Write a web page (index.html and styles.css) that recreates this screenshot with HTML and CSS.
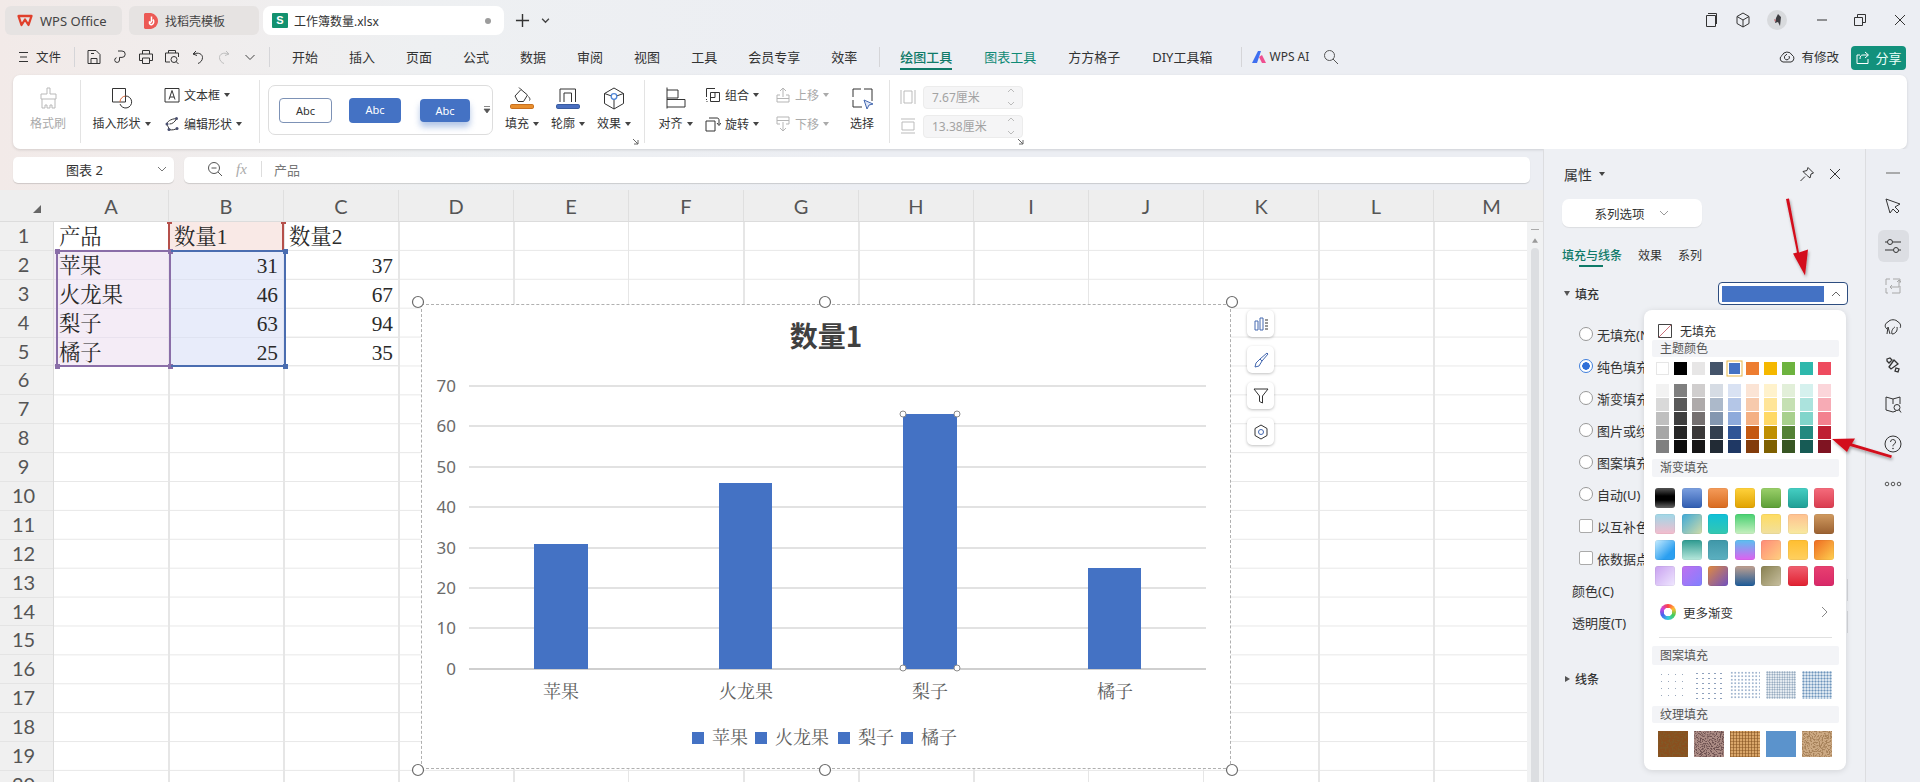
FILE: index.html
```html
<!DOCTYPE html>
<html lang="zh-CN">
<head>
<meta charset="utf-8">
<title>工作簿数量.xlsx - WPS Office</title>
<link rel="stylesheet" href="styles.css">
</head>
<body>
<div class="app">

<header class="titlebar">
  <div class="tab tab-home">
    <svg class="ic16" viewBox="0 0 16 16"><path d="M1.500 3h13L11.500 12 8 6.500 4.500 12z" fill="none" stroke="#e0402c" stroke-width="2.300" stroke-linejoin="round"/></svg>
    <span>WPS Office</span>
  </div>
  <div class="tab tab-tpl">
    <svg class="ic16" viewBox="0 0 16 16"><path d="M2 0h6c4 1 7 4 7 8s-3 7-7 8H2l-1-1V1z" fill="#ec5a55"/><path d="M8.500 3.500v4.500c0 1-1 1.500-2 1-.5 2 1 3 2.500 2.500s2.500-3 1-5" fill="none" stroke="#fff" stroke-width="1.500"/></svg>
    <span>找稻壳模板</span>
  </div>
  <div class="tab tab-file">
    <span class="s-badge">S</span>
    <span class="tab-name">工作簿数量.xlsx</span>
    <i class="dot"></i>
  </div>
  <svg class="plus" viewBox="0 0 16 16"><path d="M8 1v14M1 8h14" stroke="#333" stroke-width="1.500"/></svg>
  <svg class="chev" viewBox="0 0 8 8"><path d="M1 2.500l3 3 3-3" fill="none" stroke="#444" stroke-width="1.200"/></svg>
  <div class="winctl">
    <svg class="ic16" viewBox="0 0 16 16"><path d="M3.500 3.500h9v11h-9zM5 1.500h8.500V12" fill="none" stroke="#333"/></svg>
    <svg class="ic16" viewBox="0 0 16 16"><path d="M8 1l6 3.500v7L8 15l-6-3.500v-7zM2 4.500l6 3.500 6-3.500M8 8v7" fill="none" stroke="#333"/></svg>
    <svg class="avatar" viewBox="0 0 20 20"><circle cx="10" cy="10" r="10" fill="#d8dadd"/><path d="M11 4l3 3-1 9-2-4-3 1 1-5z" fill="#3c3c40"/><path d="M7 9l2 1-1 2z" fill="#c8626a"/></svg>
    <svg class="ic12 min" viewBox="0 0 12 12"><path d="M1 6h10" stroke="#333"/></svg>
    <svg class="ic16 max" viewBox="0 0 16 16"><path d="M2.500 5.500h8v8h-8zM5.500 5.500v-3h8v8h-3" fill="none" stroke="#333"/></svg>
    <svg class="ic12 cls" viewBox="0 0 12 12"><path d="M1 1l10 10M11 1L1 11" stroke="#333"/></svg>
  </div>
</header>

<nav class="menubar">
  <div class="file-btn">
    <svg class="ic12" viewBox="0 0 12 12"><path d="M1 1.500h9M2 6h7M1 10.500h9" stroke="#333" stroke-width="1.100"/></svg>
    <span>文件</span>
  </div>
  <i class="vsep"></i>
  <div class="quick">
    <svg class="ic16" viewBox="0 0 16 16"><path d="M2 1.500h8l4 4v9H2zM5 14.500v-5h6v5M5 4.500h3" fill="none" stroke="#333"/></svg>
    <svg class="ic16" viewBox="0 0 16 16"><path d="M6 2h4a3.200 3.200 0 0 1 0 6.400H7.500v2.600a2.400 2.400 0 1 1-3-2.300" fill="none" stroke="#333"/></svg>
    <svg class="ic16" viewBox="0 0 16 16"><path d="M4.500 5V1.500h7V5M4.500 11.500H1.500V5h13v6.500h-3M4.500 9h7v5.500h-7z" fill="none" stroke="#333"/></svg>
    <svg class="ic16" viewBox="0 0 16 16"><path d="M4.500 4V1.500h7V4M6 13H1.500V4h13v4" fill="none" stroke="#333"/><circle cx="10" cy="10.500" r="3" fill="none" stroke="#333"/><path d="M12 12.500l2.500 2.500" stroke="#333"/></svg>
    <svg class="ic16" viewBox="0 0 16 16"><path d="M6 2L3 5l4 1.500M3.500 5c5-2 9 0 9 3.500 0 3-2 5-4.500 6" fill="none" stroke="#333"/></svg>
    <svg class="ic16" viewBox="0 0 16 16"><path d="M10 2l3 3-4 1.500M12.500 5c-5-2-9 0-9 3.500 0 3 2 5 4.500 6" fill="none" stroke="#bdbdbd"/></svg>
    <svg class="ic16" viewBox="0 0 16 16"><path d="M3.500 6l4.500 4.500L12.500 6" fill="none" stroke="#444"/></svg>
  </div>
  <i class="vsep sep-menu"></i>
  <div class="menus">
    <span>开始</span><span>插入</span><span>页面</span><span>公式</span><span>数据</span><span>审阅</span><span>视图</span><span>工具</span><span>会员专享</span><span>效率</span>
  </div>
  <i class="vsep sep-ctx"></i>
  <div class="menus menus-ctx">
    <span class="on">绘图工具</span><span class="green">图表工具</span><span>方方格子</span><span>DIY工具箱</span>
  </div>
  <i class="vsep sep-ai"></i>
  <svg class="ai-logo" viewBox="0 0 14 14"><path d="M0 13L6 1h3L5 13z" fill="#3f6ff0"/><path d="M7 7l3 6h4l-4-8z" fill="#ef4f90"/></svg>
  <span class="ai-text">WPS AI</span>
  <svg class="ic16 ai-search" viewBox="0 0 16 16"><circle cx="6.500" cy="6.500" r="5" fill="none" stroke="#555"/><path d="M10 10l5 5" stroke="#555"/></svg>
  <div class="menu-right">
    <svg class="ic16" viewBox="0 0 16 16"><path d="M4 13a3.500 3.500 0 0 1-1-6.500A5.500 5.500 0 0 1 13 6a3.800 3.800 0 0 1-1 7z" fill="none" stroke="#333"/><path d="M10 7a2.500 2.500 0 1 1-3-1l1-1" fill="none" stroke="#333"/></svg>
    <span class="saved">有修改</span>
    <button class="share">
      <svg class="ic16" viewBox="0 0 16 16"><path d="M13 9v4.500H2V5h3M10 2l3.500 3L10 8M13 5H8c-2 0-3 1-3 4" fill="none" stroke="#fff"/></svg>
      <span>分享</span>
    </button>
  </div>
</nav>

<section class="ribbon">
  <div class="rgroup g-paint">
    <div class="big disabled">
      <svg class="ic24" viewBox="0 0 24 24"><path d="M11 2h3v6h6v5H5V8h6zM6 13v9h3v-3h2v3h3v-3h2v3h3v-9" fill="none" stroke="#b9b9b9"/></svg>
      <span>格式刷</span>
    </div>
  </div>
  <div class="rgroup g-shape">
    <div class="big w57">
      <svg class="ic24" viewBox="0 0 24 24"><path d="M2.500 2.500h13v13.500h-13z" fill="none" stroke="#333"/><path d="M15.500 10a6 6 0 1 1-5.500 8" fill="none" stroke="#333"/><path d="M10 16a6 6 0 0 1 5.500-6" fill="none" stroke="#dc6a3c"/></svg>
      <span>插入形状<b class="ca"></b></span>
    </div>
    <div class="scol">
      <div class="sitem"><svg class="ic16" viewBox="0 0 16 16"><path d="M4 1.500H1V15h3M12 1.500h3V15h-3M4 1.500h8M4 15h8" fill="none" stroke="#333"/><path d="M5 12.500l3-9 3 9M6 10h4" fill="none" stroke="#333"/></svg><span>文本框<b class="ca"></b></span></div>
      <div class="sitem"><svg class="ic16" viewBox="0 0 16 16"><path d="M12.500 2.500C6 3 3 6 3 8s2 3 2 5.500M5 13.500c3 1 6 0 8-1M5.500 8c3 0 5-2 7-5" fill="none" stroke="#333"/><circle cx="12.500" cy="2.500" r="1.500" fill="#4a4f70"/><circle cx="3" cy="8" r="1.500" fill="#4a4f70"/><circle cx="5" cy="13.500" r="1.500" fill="#4a4f70"/><circle cx="13" cy="12.500" r="1.500" fill="#4a4f70"/></svg><span>编辑形状<b class="ca"></b></span></div>
    </div>
  </div>
  <div class="rgroup g-style">
    <div class="gallery">
      <span class="abc abc-outline">Abc</span>
      <span class="abc abc-fill">Abc</span>
      <span class="abc abc-glow">Abc</span>
      <svg class="gal-more" viewBox="0 0 8 10"><path d="M1 1.500h6M1 4l3 4 3-4z" fill="#555" stroke="#555" stroke-width=".7"/></svg>
    </div>
    <div class="big w34">
      <svg class="ic24" viewBox="0 0 24 24"><path d="M5 10l6-6.500 6.500 5.500-4 6.500H8zM11 3.500L9 1.500M18.500 10.500c1 1.500 2 2.500 1 4" fill="none" stroke="#333"/><rect x=".5" y="18.500" width="23" height="4" rx="1.200" fill="#e88f2e" stroke="#c87020"/></svg>
      <span>填充<b class="ca"></b></span>
    </div>
    <div class="big w34">
      <svg class="ic24" viewBox="0 0 24 24"><path d="M4 16V3h15.500v13M8 16V7h7.500v9" fill="none" stroke="#333"/><rect x=".5" y="18.500" width="23" height="4" rx="1.200" fill="#4a6fc0" stroke="#3a5ca0"/></svg>
      <span>轮廓<b class="ca"></b></span>
    </div>
    <div class="big w34">
      <svg class="ic24" viewBox="0 0 24 24"><path d="M12 2l9.500 5.500v10L12 23l-9.500-5.500v-10zM2.500 7.500l7 2.500M21.500 7.500l-7 2.500M12 13v10" fill="none" stroke="#333"/><circle cx="12" cy="10.500" r="2.800" fill="none" stroke="#4f86d8" stroke-width="1.300"/></svg>
      <span>效果<b class="ca"></b></span>
    </div>
    <svg class="corner" viewBox="0 0 7 7"><path d="M1 1l5 5M6 2v4H2" fill="none" stroke="#666"/></svg>
  </div>
  <div class="rgroup g-arrange">
    <div class="big w35">
      <svg class="ic24" viewBox="0 0 24 24"><path d="M3 1.500v21M3 4h11v8H3M3 13.500h18v7.500H3" fill="none" stroke="#333"/></svg>
      <span>对齐<b class="ca"></b></span>
    </div>
    <div class="scol w70">
      <div class="sitem"><svg class="ic16" viewBox="0 0 16 16"><path d="M1.500 10V1.500H10M5.500 5.500h9v9h-9zM10 5.500v5H5.500M1.500 12v1M1.500 14.500h1" fill="none" stroke="#333"/></svg><span>组合<b class="ca"></b></span></div>
      <div class="sitem"><svg class="ic16" viewBox="0 0 16 16"><path d="M1 5h9v10H1zM4 2h8c1.500 0 2 1 2 2v4M12 7l2 2.500L16 7" fill="none" stroke="#333"/></svg><span>旋转<b class="ca"></b></span></div>
    </div>
    <div class="scol w74 disabled">
      <div class="sitem"><svg class="ic16" viewBox="0 0 16 16"><path d="M8 1v9M5 4l3-3 3 3M5 8H2v7h12V8h-3M2 11.500h12" fill="none" stroke="#b5b5b5"/></svg><span>上移<b class="ca"></b></span></div>
      <div class="sitem"><svg class="ic16" viewBox="0 0 16 16"><path d="M5 8H2V1h12v7h-3M2 4.500h12M8 6v9M5 12l3 3 3-3" fill="none" stroke="#b5b5b5"/></svg><span>下移<b class="ca"></b></span></div>
    </div>
    <div class="big w26">
      <svg class="ic24" viewBox="0 0 24 24"><path d="M3 3h8M14 3h8v12M3 3v8M3 14v7h9" fill="none" stroke="#333"/><path d="M14 14l9 4-4 1-2 4z" fill="#dfe7f8" stroke="#4468b0"/></svg>
      <span>选择</span>
    </div>
  </div>
  <div class="rgroup g-size">
    <div class="sizerow">
      <svg class="ic16" viewBox="0 0 16 16"><path d="M1 1v14M15 1v14M4 2h8v12H4z" fill="none" stroke="#bbb"/></svg>
      <div class="num"><span>7.67厘米</span><svg class="spin" viewBox="0 0 8 20"><path d="M1 5l3-3 3 3M1 15l3 3 3-3" fill="none" stroke="#bbb"/></svg></div>
    </div>
    <div class="sizerow">
      <svg class="ic16" viewBox="0 0 16 16"><path d="M1 1h14M1 15h14M2 4h12v8H2z" fill="none" stroke="#bbb"/></svg>
      <div class="num"><span>13.38厘米</span><svg class="spin" viewBox="0 0 8 20"><path d="M1 5l3-3 3 3M1 15l3 3 3-3" fill="none" stroke="#bbb"/></svg></div>
    </div>
    <svg class="corner corner2" viewBox="0 0 7 7"><path d="M1 1l5 5M6 2v4H2" fill="none" stroke="#666"/></svg>
  </div>
</section>

<main class="work">
  <div class="left">
    <div class="formula">
      <div class="namebox"><span>图表 2</span><svg class="ic12" viewBox="0 0 12 12"><path d="M2 4l4 4 4-4" fill="none" stroke="#777"/></svg></div>
      <div class="fbar">
        <svg class="ic16" viewBox="0 0 16 16"><circle cx="7" cy="7" r="5.500" fill="none" stroke="#555"/><path d="M11 11l4 4M4.500 7h5" stroke="#555"/></svg>
        <i class="fx">fx</i>
        <i class="fsep"></i>
        <span>产品</span>
      </div>
    </div>

    <div class="sheet">
      <div class="colhead">
        <div class="corner-cell"><svg viewBox="0 0 10 10"><path d="M9 1v8H1z" fill="#666"/></svg></div>
        <span>A</span><span>B</span><span>C</span><span>D</span><span>E</span><span>F</span><span>G</span><span>H</span><span>I</span><span>J</span><span>K</span><span>L</span><span>M</span>
      </div>
      <div class="sheet-body">
        <div class="rowhead">
          <span>1</span><span>2</span><span>3</span><span>4</span><span>5</span><span>6</span><span>7</span><span>8</span><span>9</span><span>10</span><span>11</span><span>12</span><span>13</span><span>14</span><span>15</span><span>16</span><span>17</span><span>18</span><span>19</span><span>20</span>
        </div>
        <div class="grid">
          <div class="cell">产品</div><div class="cell tint-red">数量1</div><div class="cell">数量2</div>
          <div class="cell tint-pur">苹果</div><div class="cell tint-blu num-c">31</div><div class="cell num-c">37</div>
          <div class="cell tint-pur">火龙果</div><div class="cell tint-blu num-c">46</div><div class="cell num-c">67</div>
          <div class="cell tint-pur">梨子</div><div class="cell tint-blu num-c">63</div><div class="cell num-c">94</div>
          <div class="cell tint-pur">橘子</div><div class="cell tint-blu num-c">25</div><div class="cell num-c">35</div>
          <div class="rng rng-red"><i class="hd tl"></i><i class="hd tr"></i></div>
          <div class="rng rng-pur"><i class="hd tl"></i><i class="hd tr"></i><i class="hd bl"></i><i class="hd br"></i></div>
          <div class="rng rng-blu"><i class="hd tr"></i><i class="hd br"></i></div>

          <div class="chart">
            <svg class="plot" viewBox="421 304 810 465">
              <text class="ct-title" x="826" y="347" text-anchor="middle">数量1</text>
              <g stroke="#d9d9d9" stroke-width="1.300">
                <path d="M469 386H1206M469 426H1206M469 467H1206M469 507H1206M469 548H1206M469 588H1206M469 628H1206"/>
                <path d="M469 669H1206" stroke="#cfcfcf" stroke-width="2"/>
              </g>
              <g class="ct-axis" text-anchor="end">
                <text x="456" y="392">70</text><text x="456" y="432">60</text><text x="456" y="473">50</text><text x="456" y="513">40</text><text x="456" y="554">30</text><text x="456" y="594">20</text><text x="456" y="634">10</text><text x="456" y="675">0</text>
              </g>
              <g fill="#4472c4">
                <rect x="534" y="544" width="54" height="125"/>
                <rect x="719" y="483" width="53" height="186"/>
                <rect x="903" y="414" width="54" height="255"/>
                <rect x="1088" y="568" width="53" height="101"/>
              </g>
              <g fill="#fff" stroke="#8a8a8a">
                <circle cx="903" cy="414" r="3"/><circle cx="957" cy="414" r="3"/><circle cx="903" cy="668" r="3"/><circle cx="957" cy="668" r="3"/>
              </g>
              <g class="ct-cat" text-anchor="middle">
                <text x="561" y="698">苹果</text><text x="746" y="698">火龙果</text><text x="930" y="698">梨子</text><text x="1115" y="698">橘子</text>
              </g>
              <g fill="#4472c4">
                <rect x="692" y="732" width="12" height="12"/><rect x="755" y="732" width="12" height="12"/><rect x="838" y="732" width="12" height="12"/><rect x="901" y="732" width="12" height="12"/>
              </g>
              <g class="ct-cat">
                <text x="712" y="744">苹果</text><text x="775" y="744">火龙果</text><text x="858" y="744">梨子</text><text x="921" y="744">橘子</text>
              </g>
              <g fill="#fff" stroke="#6b6b6b" stroke-width="1.200">
                <circle cx="418" cy="302" r="5.500"/><circle cx="825" cy="302" r="5.500"/><circle cx="1232" cy="302" r="5.500"/>
                <circle cx="418" cy="770" r="5.500"/><circle cx="825" cy="770" r="5.500"/><circle cx="1232" cy="770" r="5.500"/>
              </g>
            </svg>
            <div class="chart-tools">
              <span><svg class="ic16" viewBox="0 0 16 16"><path d="M2 5h3v9H2zM7 2h3v12H7z" fill="none" stroke="#4468b0"/><path d="M12 4h3M12 7h3M12 10h3M12 13h3" stroke="#333"/></svg></span>
              <span><svg class="ic16" viewBox="0 0 16 16"><path d="M14 1l1 1-6 7-2-2zM7 7L3 11l-1 4 4-1 3-5" fill="none" stroke="#4468b0"/></svg></span>
              <span><svg class="ic16" viewBox="0 0 16 16"><path d="M1 1h14L9.500 8v7l-3-1.500V8z" fill="none" stroke="#333"/></svg></span>
              <span><svg class="ic16" viewBox="0 0 16 16"><path d="M8 1l6 3.500v7L8 15l-6-3.500v-7z" fill="none" stroke="#333"/><circle cx="8" cy="8" r="2.500" fill="none" stroke="#4468b0"/></svg></span>
            </div>
          </div>
        </div>
        <div class="vscroll">
          <i class="vs-minus"></i>
          <svg class="vs-up" viewBox="0 0 8 6"><path d="M4 0l4 6H0z" fill="#999"/></svg>
          <i class="vs-thumb"></i>
        </div>
      </div>
    </div>
  </div>

  <aside class="panel">
    <div class="p-head">
      <span class="p-title">属性<b class="ca"></b></span>
      <svg class="ic16 p-pin" viewBox="0 0 16 16"><path d="M9 1.500l5.500 5.500-2.500 1-1 4L7.500 9l-3.500-3.500 4-1zM6 10.500l-4.500 4.500" fill="none" stroke="#333"/></svg>
      <svg class="ic12 p-x" viewBox="0 0 12 12"><path d="M1 1l10 10M11 1L1 11" stroke="#333"/></svg>
    </div>
    <button class="p-select"><span>系列选项</span><svg class="ic12" viewBox="0 0 12 12"><path d="M2 4l4 4 4-4" fill="none" stroke="#999"/></svg></button>
    <div class="p-tabs"><span class="on">填充与线条</span><span>效果</span><span>系列</span></div>
    <div class="p-sec">
      <i class="tri-d"></i><strong>填充</strong>
      <div class="colorbox"><i></i><svg class="ic12" viewBox="0 0 12 12"><path d="M2 8l4-4 4 4" fill="none" stroke="#666"/></svg></div>
    </div>
    <div class="opts">
      <label class="opt"><i class="radio"></i>无填充(N)</label>
      <label class="opt"><i class="radio sel"></i>纯色填充(S)</label>
      <label class="opt"><i class="radio"></i>渐变填充(G)</label>
      <label class="opt"><i class="radio"></i>图片或纹理填充(P)</label>
      <label class="opt"><i class="radio"></i>图案填充(A)</label>
      <label class="opt"><i class="radio"></i>自动(U)</label>
      <label class="opt"><i class="check"></i>以互补色代表负值(H)</label>
      <label class="opt"><i class="check"></i>依数据点着色(V)</label>
      <div class="opt plain">颜色(C)<i class="ghost"></i></div>
      <div class="opt plain">透明度(T)<i class="ghost"></i></div>
    </div>
    <div class="p-sec p-line"><i class="tri-r"></i><strong>线条</strong></div>

    <div class="popup">
      <div class="pop-none">
        <svg class="ic14" viewBox="0 0 14 14"><path d="M.5.500h13v13H.500z" fill="none" stroke="#444"/><path d="M1 13L13 1" stroke="#c9707a"/></svg>
        <span>无填充</span>
      </div>
      <div class="pop-h">主题颜色</div>
      <svg class="theme" viewBox="0 0 175 14">
        <rect x=".5" y=".5" width="12" height="12" fill="#fff" stroke="#e6e6e6"/>
        <rect x="18" width="13" height="13" fill="#000"/>
        <rect x="36" width="13" height="13" fill="#e7e6e6"/>
        <rect x="54" width="13" height="13" fill="#44546a"/>
        <rect x="71" y="-1" width="15" height="15" fill="#fff" stroke="#e8b74a"/>
        <rect x="73" y="1" width="11" height="11" fill="#4472c4"/>
        <rect x="90" width="13" height="13" fill="#ed7d31"/>
        <rect x="108" width="13" height="13" fill="#f5b800"/>
        <rect x="126" width="13" height="13" fill="#6db33f"/>
        <rect x="144" width="13" height="13" fill="#2eb8ac"/>
        <rect x="162" width="13" height="13" fill="#ee4b5f"/>
      </svg>
      <svg class="shades" viewBox="0 0 175 69">
        <g><rect width="13" height="13" fill="#f2f2f2"/><rect y="14" width="13" height="13" fill="#d9d9d9"/><rect y="28" width="13" height="13" fill="#bfbfbf"/><rect y="42" width="13" height="13" fill="#a6a6a6"/><rect y="56" width="13" height="13" fill="#808080"/></g>
        <g transform="translate(18)"><rect width="13" height="13" fill="#7f7f7f"/><rect y="14" width="13" height="13" fill="#595959"/><rect y="28" width="13" height="13" fill="#3f3f3f"/><rect y="42" width="13" height="13" fill="#262626"/><rect y="56" width="13" height="13" fill="#0d0d0d"/></g>
        <g transform="translate(36)"><rect width="13" height="13" fill="#d0cece"/><rect y="14" width="13" height="13" fill="#aeaaaa"/><rect y="28" width="13" height="13" fill="#757070"/><rect y="42" width="13" height="13" fill="#3a3838"/><rect y="56" width="13" height="13" fill="#171616"/></g>
        <g transform="translate(54)"><rect width="13" height="13" fill="#d6dce4"/><rect y="14" width="13" height="13" fill="#acb9ca"/><rect y="28" width="13" height="13" fill="#8497b0"/><rect y="42" width="13" height="13" fill="#333f4f"/><rect y="56" width="13" height="13" fill="#222b35"/></g>
        <g transform="translate(72)"><rect width="13" height="13" fill="#d9e2f3"/><rect y="14" width="13" height="13" fill="#b4c6e7"/><rect y="28" width="13" height="13" fill="#8eaadb"/><rect y="42" width="13" height="13" fill="#2f5496"/><rect y="56" width="13" height="13" fill="#1f3864"/></g>
        <g transform="translate(90)"><rect width="13" height="13" fill="#fbe4d5"/><rect y="14" width="13" height="13" fill="#f7caac"/><rect y="28" width="13" height="13" fill="#f4b083"/><rect y="42" width="13" height="13" fill="#c45911"/><rect y="56" width="13" height="13" fill="#833c0b"/></g>
        <g transform="translate(108)"><rect width="13" height="13" fill="#fff2cc"/><rect y="14" width="13" height="13" fill="#ffe599"/><rect y="28" width="13" height="13" fill="#ffd966"/><rect y="42" width="13" height="13" fill="#bf8f00"/><rect y="56" width="13" height="13" fill="#7f6000"/></g>
        <g transform="translate(126)"><rect width="13" height="13" fill="#e2efd9"/><rect y="14" width="13" height="13" fill="#c5e0b3"/><rect y="28" width="13" height="13" fill="#a8d08d"/><rect y="42" width="13" height="13" fill="#538135"/><rect y="56" width="13" height="13" fill="#385623"/></g>
        <g transform="translate(144)"><rect width="13" height="13" fill="#d5f1ee"/><rect y="14" width="13" height="13" fill="#abe3dd"/><rect y="28" width="13" height="13" fill="#81d5cb"/><rect y="42" width="13" height="13" fill="#22897f"/><rect y="56" width="13" height="13" fill="#175b55"/></g>
        <g transform="translate(162)"><rect width="13" height="13" fill="#fbd5da"/><rect y="14" width="13" height="13" fill="#f7abb5"/><rect y="28" width="13" height="13" fill="#f3818f"/><rect y="42" width="13" height="13" fill="#bf1f33"/><rect y="56" width="13" height="13" fill="#7f1422"/></g>
      </svg>
      <div class="pop-h h-grad">渐变填充</div>
      <div class="grads">
        <i class="g1"></i><i class="g2"></i><i class="g3"></i><i class="g4"></i><i class="g5"></i><i class="g6"></i><i class="g7"></i>
        <i class="g8"></i><i class="g9"></i><i class="g10"></i><i class="g11"></i><i class="g12"></i><i class="g13"></i><i class="g14"></i>
        <i class="g15"></i><i class="g16"></i><i class="g17"></i><i class="g18"></i><i class="g19"></i><i class="g20"></i><i class="g21"></i>
        <i class="g22"></i><i class="g23"></i><i class="g24"></i><i class="g25"></i><i class="g26"></i><i class="g27"></i><i class="g28"></i>
      </div>
      <div class="pop-more">
        <i class="wheel"></i><span>更多渐变</span>
        <svg class="ic12" viewBox="0 0 12 12"><path d="M4 1l5 5-5 5" fill="none" stroke="#888"/></svg>
      </div>
      <div class="pop-div"></div>
      <div class="pop-h h-pat">图案填充</div>
      <div class="tiles">
        <i class="p1"></i><i class="p2"></i><i class="p3"></i><i class="p4"></i><i class="p5"></i>
      </div>
      <div class="pop-h h-tex">纹理填充</div>
      <div class="tiles tex">
        <svg viewBox="0 0 30 26"><rect width="30" height="26" fill="#8a4f1e"/><rect width="30" height="26" filter="url(#nDark)"/></svg>
        <svg viewBox="0 0 30 26"><rect width="30" height="26" fill="#ad8d86"/><rect width="30" height="26" filter="url(#nDark2)"/></svg>
        <i class="t3"></i>
        <i class="t4"></i>
        <svg viewBox="0 0 30 26"><rect width="30" height="26" fill="#cdaa84"/><rect width="30" height="26" filter="url(#nBrown)"/></svg>
      </div>
    </div>
  </aside>

  <aside class="rail">
    <svg class="rail-i" viewBox="0 0 18 18"><path d="M2 9h14" stroke="#999" stroke-width="1.600"/></svg>
    <svg class="rail-i r-cursor" viewBox="0 0 18 18"><path d="M2 2l14 5-5 3 4 4-2 2-4-4-3 4z" fill="none" stroke="#333"/></svg>
    <span class="rail-on"><svg class="rail-i" viewBox="0 0 18 18"><path d="M1 5h2M9 5h8M1 13h8M15 13h2" stroke="#333"/><circle cx="6" cy="5" r="2.500" fill="none" stroke="#333"/><circle cx="12" cy="13" r="2.500" fill="none" stroke="#333"/></svg></span>
    <svg class="rail-i" viewBox="0 0 18 18"><path d="M2 8V2h4M9 2h7v4M16 9v7H8M2 11v5h2M13 5l2-2M15 3l2 2M15 3v7H6M6 10l2-2M6 10l2 2" fill="none" stroke="#a8a8a8"/></svg>
    <svg class="rail-i" viewBox="0 0 18 18"><path d="M3 12C0 10 1 6 4 5c2-3 8-3 10 0 3 1 3 5 2 6M3 17l1-7 2 7M8 17c-1-3 1-6 3-7M8 17c3 0 6-3 5-7" fill="none" stroke="#333"/></svg>
    <svg class="rail-i" viewBox="0 0 18 18"><path d="M3 3l3-1 2 2-3 3-2-2zM15 13l-1 3-3-1 1-3zM5 11l5-7 4 4-7 5z" fill="none" stroke="#333" stroke-width="1.300"/></svg>
    <svg class="rail-i" viewBox="0 0 18 18"><path d="M9 3L2 1v13l7 2 3-1M9 3v5M9 3l7-2v7" fill="none" stroke="#333"/><circle cx="13" cy="11.500" r="3" fill="none" stroke="#333"/><path d="M15 13.500l2 3" stroke="#333"/></svg>
    <svg class="rail-i" viewBox="0 0 18 18"><circle cx="9" cy="9" r="8" fill="none" stroke="#333"/><path d="M6.500 7a2.500 2.500 0 1 1 3.500 2.300c-1 .4-1 1-1 2" fill="none" stroke="#333"/><circle cx="9" cy="13.500" r=".8" fill="#333"/></svg>
    <svg class="rail-i" viewBox="0 0 18 18"><circle cx="3" cy="9" r="1.800" fill="none" stroke="#555"/><circle cx="9" cy="9" r="1.800" fill="none" stroke="#555"/><circle cx="15" cy="9" r="1.800" fill="none" stroke="#555"/></svg>
  </aside>
</main>

<svg class="arrows" viewBox="0 0 1920 782">
  <defs>
    <filter id="shadow" x="-30%" y="-30%" width="160%" height="160%"><feDropShadow dx="1" dy="2" stdDeviation="1.500" flood-color="#000" flood-opacity=".35"/></filter>
    <filter id="nDark" x="0" y="0" width="100%" height="100%"><feTurbulence type="fractalNoise" baseFrequency=".55" numOctaves="2" seed="3"/><feColorMatrix values="0 0 0 0 .22 0 0 0 0 .1 0 0 0 0 .02 5 0 0 0 -2.200"/></filter>
    <filter id="nDark2" x="0" y="0" width="100%" height="100%"><feTurbulence type="fractalNoise" baseFrequency=".8" numOctaves="2" seed="8"/><feColorMatrix values="0 0 0 0 .15 0 0 0 0 .08 0 0 0 0 .08 6 0 0 0 -2.800"/></filter>
    <filter id="nBrown" x="0" y="0" width="100%" height="100%"><feTurbulence type="fractalNoise" baseFrequency=".7" numOctaves="2" seed="5"/><feColorMatrix values="0 0 0 0 .38 0 0 0 0 .22 0 0 0 0 .1 6 0 0 0 -2.700"/></filter>
  </defs>
  <g fill="#d3101c" filter="url(#shadow)">
    <path d="M1786 199l3-.500 10 54 9-3-3 26-12-22 4-1z"/>
    <path d="M1832 439l23-.500-3 5 40 12-1 2.500-41-12-3 6z"/>
  </g>
</svg>
</div>
</body>
</html>
```
FILE: styles.css
```css
*{box-sizing:border-box;margin:0;padding:0}
html,body{width:1920px;height:782px;overflow:hidden}
body{font-family:"Noto Sans","Noto Sans CJK SC",sans-serif;font-size:12px;color:#333;background:#eceef3}
i,b{font-style:normal;font-weight:normal;display:inline-block}
button{font:inherit;color:inherit;border:0;background:none}
svg{flex:none;display:block}
.ic12{width:12px;height:12px}.ic14{width:14px;height:14px}.ic16{width:16px;height:16px}.ic24{width:24px;height:24px}
.app{position:relative;width:1920px;height:782px;overflow:hidden;display:flex;flex-direction:column;background:linear-gradient(90deg,#f2eae8 0,#eef0f2 22%,#eceef3 45%)}

/* title bar */
.titlebar{height:40px;flex:none;display:flex;align-items:flex-start;padding:6px 0 0 5px}
.tab{height:29px;display:flex;align-items:center;border-radius:6px;background:#e6e3e2;margin-right:7px;white-space:nowrap}
.tab-home{width:117px;padding-left:12px;gap:7px;font-size:13px;color:#444}
.tab-tpl{width:130px;padding-left:14px;gap:6px;color:#444;margin-right:4px}
.tab-file{width:241px;background:#fff;border-radius:8px;padding-left:9px;gap:6px;margin-right:10px}
.s-badge{width:16px;height:15px;background:#13916f;color:#fff;font:bold 11px/15px "Liberation Sans",sans-serif;text-align:center;border-radius:1px}
.tab-name{flex:1}
.dot{width:6px;height:6px;border-radius:50%;background:#9c9c9c;margin-right:13px}
.plus{width:15px;height:15px;margin:7px 0 0 1px}
.chev{width:9px;height:9px;margin:10px 0 0 11px}
.winctl{margin-left:auto;display:flex;align-items:center;height:28px}
.winctl>svg:nth-child(2){margin-left:16px}
.avatar{width:20px;height:20px;margin-left:16px}
.min{margin-left:29px}.max{margin-left:24px}.cls{margin:0 14px 0 26px}

/* menu bar */
.menubar{height:35px;flex:none;display:flex;align-items:center;font-size:13px;color:#333;padding-bottom:2px}
.file-btn{display:flex;align-items:center;gap:6px;margin-left:18px;font-size:12.500px}
.vsep{width:1px;height:20px;background:#d5d5d8;margin-left:13px}
.quick{display:flex;gap:10px;margin-left:11px}
.sep-menu{margin-left:11px}
.menus{display:flex;gap:31px;margin-left:22px;white-space:nowrap}
.sep-ctx{margin-left:22px}
.menus-ctx{gap:32px;margin-left:20px}
.menus .on{color:#0f7a68;font-weight:500;position:relative}
.menus .on::after{content:"";position:absolute;left:0;right:0;bottom:-4px;height:2px;background:#0f7a68}
.green{color:#0f8a75}
.sep-ai{margin-left:29px}
.ai-logo{width:14px;height:14px;margin-left:10px}
.ai-text{margin-left:3px;font-size:12px}
.ai-search{margin-left:14px}
.menu-right{margin-left:auto;display:flex;align-items:center;padding-right:14px}
.saved{margin:0 12px 0 6px;font-size:12.500px}
.share{width:55px;height:24px;background:#12917c;border-radius:4px;color:#fff;display:flex;align-items:center;justify-content:center;gap:4px;font-size:13px;margin-top:2px}
.share span{color:#eafff9}

/* ribbon */
.ribbon{height:74px;flex:none;margin:0 13px;background:#fff;border-radius:7px;display:flex;box-shadow:0 1px 3px rgba(0,0,0,.13);font-size:12px}
.rgroup{position:relative;display:flex;height:100%;padding-top:9px}
.rgroup::after{content:"";position:absolute;right:0;top:5px;bottom:6px;width:1px;background:#e3e3e3}
.g-paint{width:68px;padding-left:18px}
.g-shape{width:179px;padding-left:12px;gap:14px}
.g-style{width:385px;padding-left:8px}
.g-arrange{width:245px;padding-left:13px}
.g-size{padding-left:10px;flex-direction:column;gap:5px;padding-top:10px;width:200px}
.g-size::after{display:none}
.big{display:flex;flex-direction:column;align-items:center;width:34px;white-space:nowrap}
.big svg{height:24px;width:24px;margin-top:2px}
.big span{margin-top:5px;line-height:17px;display:flex;align-items:center}
.w57{width:57px}.w34{width:34px;margin-left:12px}.w35{width:35px}.w26{width:26px}
.scol{display:flex;flex-direction:column;gap:9px;margin-top:1px}
.sitem{height:20px;display:flex;align-items:center;gap:4px;white-space:nowrap}
.sitem span{display:flex;align-items:center}
.w70{width:70px;margin-left:12px}.w74{width:74px}
.ca{width:0;height:0;border:3px solid transparent;border-top:4px solid #444;border-bottom:0;margin-left:4px}
.disabled,.disabled .ca{color:#aaa;border-top-color:#aaa}
.gallery{position:relative;width:225px;height:50px;margin-top:1px;border:1px solid #ddd;border-radius:7px;display:flex;align-items:center;padding-left:10px;font:11px "Noto Sans",sans-serif}
.abc{display:block;height:25px;line-height:24px;text-align:center;border-radius:4px}
.abc-outline{width:53px;border:1.500px solid #7d92b6;color:#333}
.abc-fill{width:52px;background:#4472c4;color:#fff;margin-left:17px}
.abc-glow{width:50px;background:#4472c4;color:#fff;margin-left:19px;height:23px;line-height:23px;box-shadow:0 5px 6px rgba(68,114,196,.4)}
.gal-more{width:8px;height:10px;margin-left:13px;position:relative}
.corner{position:absolute;right:6px;bottom:4px;width:7px;height:7px}
.corner2{right:66px}
.sizerow{display:flex;align-items:center;gap:7px;height:24px;margin-left:0}
.num{width:100px;height:23px;background:#f5f5f6;border:1px solid #ececec;border-radius:4px;display:flex;align-items:center;justify-content:space-between;padding:0 7px 0 8px;color:#a3a3a3}
.spin{width:8px;height:20px}

/* work area */
.work{flex:1;display:flex;min-height:0}
.left{width:1543px;display:flex;flex-direction:column;min-height:0}
.formula{display:flex;gap:10px;margin:8px 13px 0;height:26px;flex:none}
.namebox{width:161px;background:#fff;border-radius:5px;box-shadow:0 1px 1px rgba(0,0,0,.15);display:flex;align-items:center;padding:0 6px 2px 53px;justify-content:space-between;font-size:13px}
.fbar{flex:1;background:#fff;border-radius:5px;box-shadow:0 1px 1px rgba(0,0,0,.15);display:flex;align-items:center;padding:0 0 2px 23px;font-size:13px;color:#777}
.fx{font:italic 15px "Liberation Serif",serif;color:#aaa;margin-left:13px;width:14px}
.fsep{width:1px;height:16px;background:#ddd;margin:0 12px 0 11px}
.sheet{margin-top:7px;flex:1;display:flex;flex-direction:column;min-height:0}
.colhead{height:32px;flex:none;display:flex;background:#eee;border-bottom:1px solid #dcdcdc;font:20px/32px Lato,sans-serif;color:#555}
.corner-cell{width:54px;display:flex;align-items:center;justify-content:flex-end;padding:6px 12px 0 0}
.corner-cell svg{width:10px;height:10px}
.colhead span{width:115px;text-align:center;border-right:1px solid #dfdfdf}
.colhead span:last-child{width:93px;border:0;text-indent:22px}
.sheet-body{flex:1;display:flex;min-height:0;position:relative}
.rowhead{width:54px;flex:none;background:#f0f0f0;border-right:1px solid #dcdcdc;display:flex;flex-direction:column;overflow:hidden}
.rowhead span{flex:none;height:28.900px;text-align:center;font:20px/27.900px Lato,sans-serif;color:#555;padding-right:6px;border-bottom:1px solid #e4e4e4}
.grid{position:relative;width:1473px;flex:none;display:grid;grid-template-columns:repeat(3,115px);grid-auto-rows:28.900px;align-content:start;overflow:hidden;background-color:#fff;
  background-image:linear-gradient(90deg,transparent 114px,#e6e6e6 114px),linear-gradient(transparent 27.900px,#e8e8e8 27.900px);
  background-size:115px 28.900px}
.cell{font:21.330px/30px "Liberation Serif","Noto Serif CJK SC","Noto Sans CJK SC",serif;color:#2a2a2a;padding:0 4px 0 5px;white-space:nowrap;overflow:hidden;border-right:1px solid #e6e6e6;border-bottom:1px solid #e8e8e8}
.num-c{text-align:right;padding-right:5px}
.tint-pur{background:#f4ecf6;border-color:#e9e2ee}
.tint-blu{background:#e8ecfa;border-color:#dfe3f1}
.tint-red{background:#f9e9e6;border-color:#f3dfdc}
.rng{position:absolute;display:block}
.rng-red{left:114px;top:0;width:116px;height:28px;border:solid #b5504b;border-width:0 2px;color:#b5504b}
.rng-pur{left:2px;top:28px;width:115px;height:117px;border:2px solid #8a6ea8;color:#8a6ea8}
.rng-blu{left:117px;top:28px;width:115px;height:117px;border:solid #4a6db0;border-width:2px 2px 2px 0;color:#4a6db0}
.hd{position:absolute;width:5px;height:5px;background:currentColor}
.tl{left:-3.500px;top:-3.500px}.tr{right:-3.500px;top:-3.500px}.bl{left:-3.500px;bottom:-3.500px}.br{right:-3.500px;bottom:-3.500px}
.rng-red .hd{height:3px;top:-1px}
.chart{position:absolute;left:367px;top:82px;width:810px;height:465px;background:#fff;border:1px dashed #b0b0b0}
.plot{position:absolute;left:-1px;top:-1px;width:810px;height:465px;overflow:visible}
.ct-title{font:bold 28px "Noto Sans CJK SC",sans-serif;fill:#404040}
.ct-axis{font:17px "Noto Sans",sans-serif;fill:#6a6a6a}
.ct-cat{font:18px "Noto Serif CJK SC","Noto Sans CJK SC",serif;fill:#606060}
.chart-tools{position:absolute;left:825px;top:5px;display:flex;flex-direction:column;gap:9px}
.chart-tools span{width:27px;height:27px;background:#fff;border-radius:5px;box-shadow:0 1px 3px rgba(0,0,0,.25);display:flex;align-items:center;justify-content:center}
.vscroll{width:16px;flex:none;background:#f1f2f3;display:flex;flex-direction:column;align-items:center;position:relative}
.vs-minus{width:8px;height:1px;background:#aaa;margin-top:7px}
.vs-up{width:6px;height:5px;margin-top:8px}
.vs-thumb{width:8px;flex:1;background:#dcdee1;margin-top:5px;border-radius:4px 4px 0 0}

/* panel */
.panel{position:relative;width:322px;flex:none;border-left:1px solid #dcdde0;background:#eef0f4;padding-left:18px;color:#333}
.p-head{height:50px;display:flex;align-items:center}
.p-title{font-size:14px;flex:1;padding-left:2px;display:flex;align-items:center}
.p-title .ca{margin-left:7px}
.p-pin{margin-right:14px}.p-x{margin-right:24px}
.p-select{width:140px;height:28px;background:#fff;border-radius:7px;display:flex;align-items:center;justify-content:center;gap:13px;box-shadow:0 1px 1px rgba(0,0,0,.08);font-size:12.500px}
.p-tabs{height:22px;margin-top:17px;display:flex;font-size:12px;gap:16px;align-items:center}
.p-tabs .on{color:#0f7a68;font-weight:500;position:relative;font-size:12px}
.p-tabs .on::after{content:"";position:absolute;left:17px;width:24px;bottom:-3px;height:2px;background:#0f7a68}
.p-sec{height:23px;margin-top:16px;display:flex;align-items:center;position:relative}
.p-sec strong{font-size:12px;font-weight:500;margin-left:5px}
.tri-d{width:0;height:0;border:3.500px solid transparent;border-top:5px solid #555;border-bottom:0;margin-left:2px}
.tri-r{width:0;height:0;border:3.500px solid transparent;border-left:5px solid #555;border-right:0;margin-left:3px}
.colorbox{margin-left:auto;margin-right:17px;width:130px;height:23px;border:1.500px solid #2d4d80;border-radius:4px;background:#fff;display:flex;align-items:center;padding-left:3px;gap:6px}
.colorbox i{width:102px;height:16px;background:#4472c4}
.opts{margin-top:13px;font-size:13px}
.opt{height:32px;display:flex;align-items:center;padding-left:17px;white-space:nowrap;gap:4px}
.radio{width:14px;height:14px;border-radius:50%;border:1px solid #999;background:#fff;flex:none}
.radio.sel{border-color:#3f7fdc;background:radial-gradient(circle,#2f6fd8 0 3.500px,#fff 4px)}
.check{width:14px;height:14px;border-radius:2px;border:1px solid #aaa;background:#fff;flex:none}
.opt.plain{padding-left:10px;position:relative}
.ghost{position:absolute;right:17px;top:5px;width:30px;height:22px;border-right:1px solid #d4d6da}
.p-line{margin-top:25px;height:32px}
.popup{position:absolute;left:100px;top:161px;width:202px;height:460px;background:#fff;border-radius:8px;box-shadow:0 1px 6px rgba(0,0,0,.12);padding:11px 7px 0 8px;font-size:12px;z-index:3}
.pop-none{height:19px;display:flex;align-items:center;gap:8px;padding-left:6px}
.pop-h{height:17px;background:#f3f4f7;border-radius:2px;line-height:17px;padding-left:8px;color:#555;font-size:12px}
.theme{width:175px;height:14px;margin:5px 0 0 4px;overflow:visible}
.shades{width:175px;height:69px;margin:8px 0 0 4px}
.h-grad{margin-top:6px;height:18px}
.grads{display:grid;grid-template-columns:repeat(7,20px);grid-auto-rows:20px;gap:6px 6.500px;margin:11px 0 0 3px}
.grads i{border-radius:3px;box-shadow:inset 0 0 0 .5px rgba(0,0,0,.08)}
.g1{background:linear-gradient(#555,#000 40%,#000 60%,#666)}
.g2{background:linear-gradient(#7ca0e0,#2f5cb0)}
.g3{background:linear-gradient(#f59c5a,#d86a1e)}
.g4{background:linear-gradient(#ffd23c,#e0a200)}
.g5{background:linear-gradient(#9ad06a,#5b9e35)}
.g6{background:linear-gradient(#45cfc3,#1f9e94)}
.g7{background:linear-gradient(#f56c7c,#d93b4e)}
.g8{background:linear-gradient(#9ed8e8,#f5bccd)}
.g9{background:linear-gradient(135deg,#3da9d8,#d2dca8)}
.g10{background:linear-gradient(#10c0d8,#35c8b0)}
.g11{background:linear-gradient(#46d070,#c8f0c0)}
.g12{background:linear-gradient(#ffdc60,#f0e0a0)}
.g13{background:linear-gradient(#ffc090,#f8eaa0)}
.g14{background:linear-gradient(#d09a60,#9a6030)}
.g15{background:linear-gradient(315deg,#2b9ff0 30%,#c8edff)}
.g16{background:linear-gradient(#2e9a90,#b8e8dc)}
.g17{background:linear-gradient(#3f97a8,#5cb0c0)}
.g18{background:linear-gradient(#5ac0f0,#e060f0)}
.g19{background:linear-gradient(135deg,#ff8a78,#ffd080)}
.g20{background:linear-gradient(#ffbe30,#ffd060)}
.g21{background:linear-gradient(135deg,#ee6a20,#ffd050)}
.g22{background:linear-gradient(135deg,#c8a0f0,#f0e8ff)}
.g23{background:linear-gradient(135deg,#c070f0,#8080ff)}
.g24{background:linear-gradient(135deg,#e08a40,#7050c0)}
.g25{background:linear-gradient(#c0a090,#1c5a98)}
.g26{background:linear-gradient(135deg,#888050,#c8c0a0)}
.g27{background:linear-gradient(#f06070,#e02030)}
.g28{background:linear-gradient(#e84070,#d82868)}
.pop-more{height:20px;margin-top:16px;display:flex;align-items:center;padding-left:8px;font-size:12.500px}
.pop-more .ic12{margin-left:auto;margin-right:9px}
.wheel{width:16px;height:16px;border-radius:50%;background:radial-gradient(circle,#fff 0 4px,transparent 4.500px),conic-gradient(#f44,#fb3,#4c5,#3cd,#46e,#c4d,#f44);margin-right:7px}
.pop-div{height:1px;background:#e0e0e0;margin:15px 7px 0 7px}
.h-pat{margin-top:8px;height:19px;line-height:19px}
.tiles{display:flex;gap:6px;margin:6px 0 0 6px}
.tiles>*{width:30px;height:28px;display:block;flex:none}
.p1{background:radial-gradient(circle,#9aa8bc .5px,transparent 1px) 0 0/7px 7px}
.p2{background:radial-gradient(circle,#8ea0bc .6px,transparent 1px) 0 0/6px 5px}
.p3{background:radial-gradient(circle,#9db2cc .6px,transparent 1px) 0 0/3.500px 3.500px}
.p4{background:radial-gradient(circle,#7a94ae .7px,#eef2f6 1px) 0 0/2.500px 2.500px}
.p5{background:radial-gradient(circle,#6f95bc .8px,#dbe6f0 1.200px) 0 0/3px 3px}
.h-tex{margin-top:7px}
.tex{margin-top:8px}
.tex>*{height:26px}
.t3{background:repeating-linear-gradient(90deg,rgba(130,80,30,.6) 0 1px,transparent 1px 3px),repeating-linear-gradient(0deg,rgba(130,80,30,.45) 0 1px,transparent 1px 3px),#d9a66a}
.t4{background:#5b93cc}

/* right rail */
.rail{width:55px;flex:none;border-left:1px solid #dcdde0;background:#eceef3;display:flex;flex-direction:column;align-items:center;position:relative;padding:15px 0 0 0;gap:21.500px}
.rail-i{width:18px;height:18px}
.r-cursor{margin-top:-6.500px}
.rail-on{width:31px;height:32px;background:#dcdee3;border-radius:6px;display:flex;align-items:center;justify-content:center;margin:-6.500px 0}
.arrows{position:absolute;left:0;top:0;width:1920px;height:782px;pointer-events:none;z-index:5}
```
